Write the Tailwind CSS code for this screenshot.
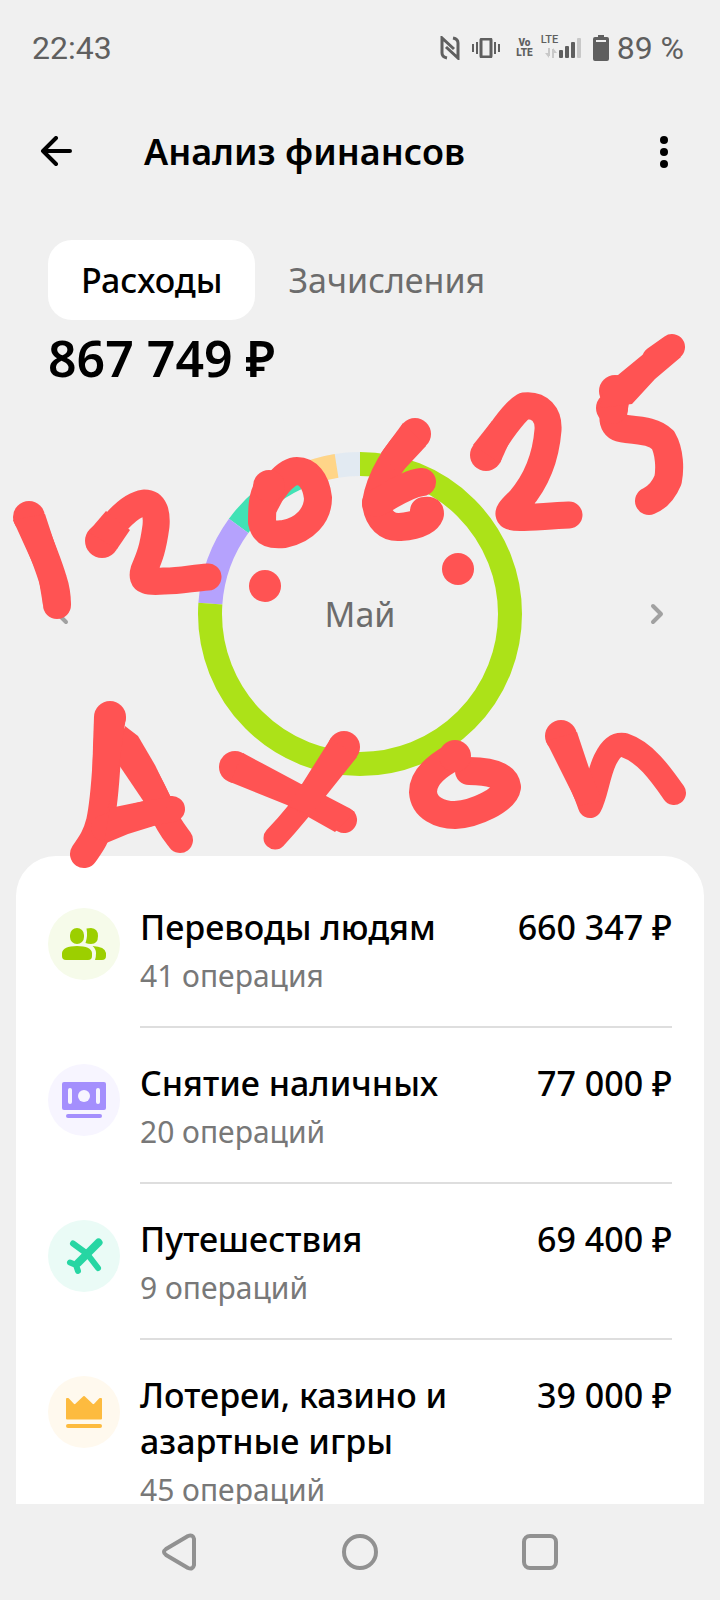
<!DOCTYPE html>
<html lang="ru">
  <head>
    <meta charset="UTF-8" />
    <meta name="viewport" content="width=device-width, initial-scale=1.0" />
    <title>Анализ финансов</title>
    <script src="https://cdn.jsdelivr.net/npm/@tailwindcss/browser@4"></script>
  </head>

  <body class="font-['Noto_Sans','Open_Sans',sans-serif] bg-[#f0f0f0] text-black">
    <div class="relative h-screen flex flex-col overflow-hidden">
      <!-- Статус-бар -->
      <div class="h-24 shrink-0 flex items-center justify-between pl-8 pr-9 font-[Roboto,sans-serif] text-[32px] text-[#5f5f5f]">
        <span>22:43</span>
        <div class="flex items-center">
          <svg class="w-5 h-6 mr-3" viewBox="0 0 20 24" fill="none" stroke="currentColor" stroke-width="3">
            <path d="M7 22 Q2 21 2 17 V2 L14 13" />
            <path d="M13 2 Q18 3 18 7 V22 L6 11" />
          </svg>
          <svg class="w-7 h-5 mr-4" viewBox="0 0 28 20" fill="none" stroke="currentColor" stroke-width="2">
            <rect x="9" y="1" width="10" height="18" rx="1" stroke-width="3" />
            <path d="M5 4v12M1 6v8M23 4v12M27 6v8" />
          </svg>
          <span class="flex flex-col items-center text-[10px] leading-[10px] font-black mr-2"><span>Vo</span><span>LTE</span></span>
          <div class="relative w-11 h-6 mr-2">
            <span class="absolute left-0 -top-0.5 text-[11px] leading-[12px] font-medium">LTE</span>
            <svg class="w-11 h-6" viewBox="0 0 44 24">
              <path d="M8 12V20M12 22V13" fill="none" stroke="#c8c8c8" stroke-width="2" />
              <path d="M4 17H8V22ZM12 12V17H16Z" fill="#c8c8c8" />
              <g fill="#5f5f5f">
                <rect x="18" y="14" width="4" height="8" rx="1" />
                <rect x="24" y="10" width="4" height="12" rx="1" />
                <rect x="30" y="6" width="4" height="16" rx="1" />
              </g>
              <rect x="36" y="2" width="4" height="20" rx="1" fill="#c8c8c8" />
            </svg>
          </div>
          <svg class="w-4 h-[26px] mr-2" viewBox="0 0 16 26">
            <path d="M5 0h6v2h3q2 0 2 2v20q0 2-2 2H2q-2 0-2-2V4q0-2 2-2h3z" fill="#5f5f5f" />
            <path d="M3 6h10" stroke="#f0f0f0" stroke-width="2" />
          </svg>
          <span>89 %</span>
        </div>
      </div>

      <!-- Шапка -->
      <header class="h-28 shrink-0 flex items-center pl-10 pr-12">
        <button type="button" aria-label="Назад" class="mr-[72px]">
          <svg class="w-8 h-8" viewBox="0 0 32 32" fill="none" stroke="currentColor" stroke-width="4" stroke-linecap="round" stroke-linejoin="round">
            <path d="M16 2 L3 15 L16 28M3 15 H30" />
          </svg>
        </button>
        <h1 class="flex-1 text-[36px] leading-[46px] font-semibold">Анализ финансов</h1>
        <button type="button" aria-label="Меню">
          <svg class="w-4 h-8" viewBox="0 0 16 32">
            <circle cx="8" cy="4" r="4" /><circle cx="8" cy="16" r="4" /><circle cx="8" cy="28" r="4" />
          </svg>
        </button>
      </header>

      <!-- Вкладки и сумма -->
      <section class="shrink-0 pt-8 px-12">
        <div class="flex text-[34px]">
          <button type="button" class="h-20 px-[33px] rounded-3xl bg-white font-medium">Расходы</button>
          <button type="button" class="h-20 px-[33px] rounded-3xl text-[#6c6c6c]">Зачисления</button>
        </div>
        <p class="text-[50px] leading-[76px] font-semibold">867 749 ₽</p>
      </section>

      <!-- Диаграмма по месяцу -->
      <section class="shrink-0 flex items-center justify-between pt-14 pb-20 px-12 text-[#a1a1a1]">
        <button type="button" aria-label="Предыдущий месяц">
          <svg class="w-7 h-7" viewBox="0 0 28 28" fill="none" stroke="currentColor" stroke-width="4" stroke-linecap="round" stroke-linejoin="round">
            <path d="M18 6 L10 14 L18 22" />
          </svg>
        </button>
        <div class="grid place-items-center *:col-start-1 *:row-start-1">
          <svg class="w-[324px] h-[324px] -rotate-90" viewBox="0 0 324 324" fill="none" stroke-width="24">
            <circle cx="162" cy="162" r="150" pathLength="360" stroke="#e2eaf2" stroke-dasharray="20 340" stroke-dashoffset="-340" />
            <circle cx="162" cy="162" r="150" pathLength="360" stroke="#ffd588" stroke-dasharray="17 343" stroke-dashoffset="-334" />
            <circle cx="162" cy="162" r="150" pathLength="360" stroke="#41e2b5" stroke-dasharray="29 331" stroke-dashoffset="-306" />
            <circle cx="162" cy="162" r="150" pathLength="360" stroke="#b5a2fd" stroke-dasharray="32 328" stroke-dashoffset="-274" />
            <circle cx="162" cy="162" r="150" pathLength="360" stroke="#ace218" stroke-dasharray="274 86" />
          </svg>
          <span class="text-[34px] text-[#6c6c6c]">Май</span>
        </div>
        <button type="button" aria-label="Следующий месяц">
          <svg class="w-7 h-7" viewBox="0 0 28 28" fill="none" stroke="currentColor" stroke-width="4" stroke-linecap="round" stroke-linejoin="round">
            <path d="M9 6 L17 14 L9 22" />
          </svg>
        </button>
      </section>

      <!-- Категории -->
      <main class="flex-1 min-h-0 overflow-hidden mx-4 px-8 pt-4 bg-white rounded-t-[40px]">
        <ul>
          <li class="flex gap-5 pt-8">
            <svg class="w-[72px] h-[72px] mt-1 shrink-0" viewBox="0 0 72 72">
              <circle cx="36" cy="36" r="36" fill="#f6fbea" />
              <g fill="#9ccf00">
                <rect x="22" y="20" width="14" height="16" rx="7" />
                <path d="M38.500 20.500 Q41 20 43 20 Q50 20.500 50 28 Q50 36 43 36 Q40 36 37.500 35 Q40 28 38.500 20.500Z" />
                <path d="M14 48 V45 Q15 38 29 38 Q43 38 44 45 V48 Q44 52 40 52 H18 Q14 52 14 48Z" />
                <path d="M44.500 38 Q57 38.500 58 45 V48 Q58 52 54 52 H47 Q48 50 48 45 Q48 41 44.500 38Z" />
              </g>
            </svg>
            <div class="flex-1 flex justify-between gap-4 pb-7 border-b-2 border-[#dedede]">
              <div>
                <h2 class="text-[34px] leading-[46px] font-medium">Переводы людям</h2>
                <p class="mt-1 text-[30px] leading-[44px] text-[#787878]">41 операция</p>
              </div>
              <span class="text-[34px] leading-[46px] font-medium whitespace-nowrap">660 347 ₽</span>
            </div>
          </li>

          <li class="flex gap-5 pt-8">
            <svg class="w-[72px] h-[72px] mt-1 shrink-0" viewBox="0 0 72 72">
              <circle cx="36" cy="36" r="36" fill="#f7f5ff" />
              <rect x="14" y="18" width="44" height="28" rx="2" fill="#a48ffd" />
              <rect x="20" y="24" width="4" height="16" rx="2" fill="#f7f5ff" />
              <rect x="48" y="24" width="4" height="16" rx="2" fill="#f7f5ff" />
              <circle cx="36" cy="32" r="6" fill="#f7f5ff" />
              <rect x="18" y="50" width="36" height="4" rx="2" fill="#a48ffd" />
            </svg>
            <div class="flex-1 flex justify-between gap-4 pb-7 border-b-2 border-[#dedede]">
              <div>
                <h2 class="text-[34px] leading-[46px] font-medium">Снятие наличных</h2>
                <p class="mt-1 text-[30px] leading-[44px] text-[#787878]">20 операций</p>
              </div>
              <span class="text-[34px] leading-[46px] font-medium whitespace-nowrap">77 000 ₽</span>
            </div>
          </li>

          <li class="flex gap-5 pt-8">
            <svg class="w-[72px] h-[72px] mt-1 shrink-0" viewBox="0 0 72 72">
              <circle cx="36" cy="36" r="36" fill="#eafbf6" />
              <g fill="none" stroke="#27d6a3" stroke-linecap="round" stroke-linejoin="round">
                <path d="M50.500 22.500 L30 43" stroke-width="8" />
                <path d="M25 23.500 L38 33" stroke-width="6" />
                <path d="M40 35 L50 48" stroke-width="6" />
                <path d="M22 42.500 L28 45 L30 51" stroke-width="6" />
              </g>
            </svg>
            <div class="flex-1 flex justify-between gap-4 pb-7 border-b-2 border-[#dedede]">
              <div>
                <h2 class="text-[34px] leading-[46px] font-medium">Путешествия</h2>
                <p class="mt-1 text-[30px] leading-[44px] text-[#787878]">9 операций</p>
              </div>
              <span class="text-[34px] leading-[46px] font-medium whitespace-nowrap">69 400 ₽</span>
            </div>
          </li>

          <li class="flex gap-5 pt-8">
            <svg class="w-[72px] h-[72px] mt-1 shrink-0" viewBox="0 0 72 72">
              <circle cx="36" cy="36" r="36" fill="#fff9ee" />
              <path d="M19 23 L20 23 L26.500 30 L36 21 L45.500 30 L52 23 L53 23 V42.500 H19Z" fill="#fdbb3f" stroke="#fdbb3f" stroke-width="2" stroke-linejoin="round" />
              <rect x="18" y="48" width="36" height="4" rx="2" fill="#fdbb3f" />
            </svg>
            <div class="flex-1 flex justify-between gap-4 pb-7">
              <div>
                <h2 class="text-[34px] leading-[46px] font-medium">Лотереи, казино и азартные игры</h2>
                <p class="mt-1 text-[30px] leading-[44px] text-[#787878]">45 операций</p>
              </div>
              <span class="text-[34px] leading-[46px] font-medium whitespace-nowrap">39 000 ₽</span>
            </div>
          </li>
        </ul>
      </main>

      <!-- Системная навигация -->
      <nav class="h-24 shrink-0 flex items-center justify-around px-[90px] text-[#919191]">
        <button type="button" aria-label="Назад">
          <svg class="w-10 h-10" viewBox="0 0 40 40" fill="none" stroke="currentColor" stroke-width="4" stroke-linejoin="round">
            <path d="M34 7 V33 Q33 38 28 36 L6 23 Q2 20 6 17 L28 4 Q33 2 34 7Z" />
          </svg>
        </button>
        <button type="button" aria-label="Домой">
          <svg class="w-10 h-10" viewBox="0 0 40 40" fill="none" stroke="currentColor" stroke-width="4">
            <circle cx="20" cy="20" r="16" />
          </svg>
        </button>
        <button type="button" aria-label="Недавние">
          <svg class="w-10 h-10" viewBox="0 0 40 40" fill="none" stroke="currentColor" stroke-width="4">
            <rect x="4" y="4" width="32" height="32" rx="6" />
          </svg>
        </button>
      </nav>

      <!-- Пометки маркером поверх экрана -->
      <svg class="absolute top-0 left-0 w-full pointer-events-none" viewBox="0 0 720 900" role="img" aria-label="12.06.25 Axon">
        <g fill="none" stroke="#ff5353" stroke-width="28" stroke-linecap="round" stroke-linejoin="round">
          <path d="M29 517 Q47 560 53 580 Q57 592 57 605" />
          <path d="M102 541 C115 521 130 505 144 503 C155 503 157 514 156 526 C153 548 150 556 144 570 C140 583 150 582 165 581 C180 581 193 578 208 577" stroke-width="27" />
          <path d="M269 486 C262 495 262 510 262 522 C265 535 275 535 284 534 C305 530 318 515 318 498 C316 480 307 471 297 471 C285 471 270 492 264 506" />
          <path d="M415 434 C396 452 380 478 376 503 C378 520 388 528 400 527 C414 526 427 522 430 514 C430 509 426 511 424 511" />
          <path d="M422 482 C405 484 390 497 376 503" />
          <path d="M486 455 C498 435 514 412 524 406 C540 404 549 415 548 430 C546 455 539 478 520 500 C512 508 507 512 510 516 C515 519 530 517 569 515" stroke-width="27" />
          <path d="M672 347 L655 359" stroke-width="26" />
          <path d="M615 402 C612 418 611 428 626 429 C645 431 655 432 663 440 C670 452 670 470 668 480 C663 492 656 498 649 501" />
          <path d="M110 717 C106 750 107 790 100 822 C96 838 90 845 84 854" />
          <path d="M122 741 C140 765 152 785 163 812 C168 825 174 832 180 840" stroke-width="26" />
          <path d="M172 809 C150 812 125 819 104 828" stroke-width="26" />
          <path d="M300 797 L344 820" stroke-width="26" />
          <path d="M325 777 C308 800 292 820 275 838" stroke-width="23" />
          <path d="M455 756 C440 764 423 776 423 792 C424 808 440 815 455 815 C475 814 505 800 507 787 C505 775 490 771 469 771" />
          <path d="M570 760 C576 772 584 788 590 806 C596 795 598 775 605 760 C611 748 616 744 624 745 C645 752 660 773 674 793" stroke-width="24" />
        </g>
        <g fill="#ff5353">
          <circle cx="29" cy="517" r="16" />
          <path d="M13 520 L38 575 L43 605 L71 605 L65 575 L45 514Z" />
          <circle cx="102" cy="541" r="17" />
          <path d="M88 532 L106 511 L130 530 L117 549Z" />
          <circle cx="265" cy="586" r="16" />
          <circle cx="269" cy="486" r="16" />
          <circle cx="415" cy="434" r="16" />
          <path d="M403 423 L381 453 L399 475 L426 446Z" />
          <circle cx="458" cy="569" r="16" />
          <circle cx="486" cy="455" r="16" />
          <path d="M473 445 L492 421 L514 432 L500 463Z" />
          <circle cx="615" cy="391" r="16" />
          <circle cx="612" cy="408" r="16" />
          <path d="M618 375 L663 338 L681 357 L655 379 L632 404 L600 408 L605 380Z" />
          <circle cx="110" cy="717" r="16" />
          <path d="M94 717 L93 745 L92 790 L108 808 L119 765 L126 717Z" />
          <path d="M125 726 L138 736 L155 765 L171 798 L146 805 L119 765Z" />
          <path d="M110 808 L144 801 L172 797 L157 825 L128 834 L104 844Z" />
          <circle cx="235" cy="767" r="16" />
          <path d="M243 753 L301 784 L355 812 L335 832 L287 805 L230 782Z" />
          <circle cx="344" cy="747" r="16" />
          <path d="M331 738 L302 784 L288 806 L310 815 L325 797 L357 757Z" />
          <circle cx="455" cy="756" r="16" />
          <circle cx="561" cy="736" r="16" />
          <path d="M546 741 L572 793 L578 806 L602 801 L589 768 L577 732Z" />
        </g>
      </svg>
    </div>
  </body>
</html>
